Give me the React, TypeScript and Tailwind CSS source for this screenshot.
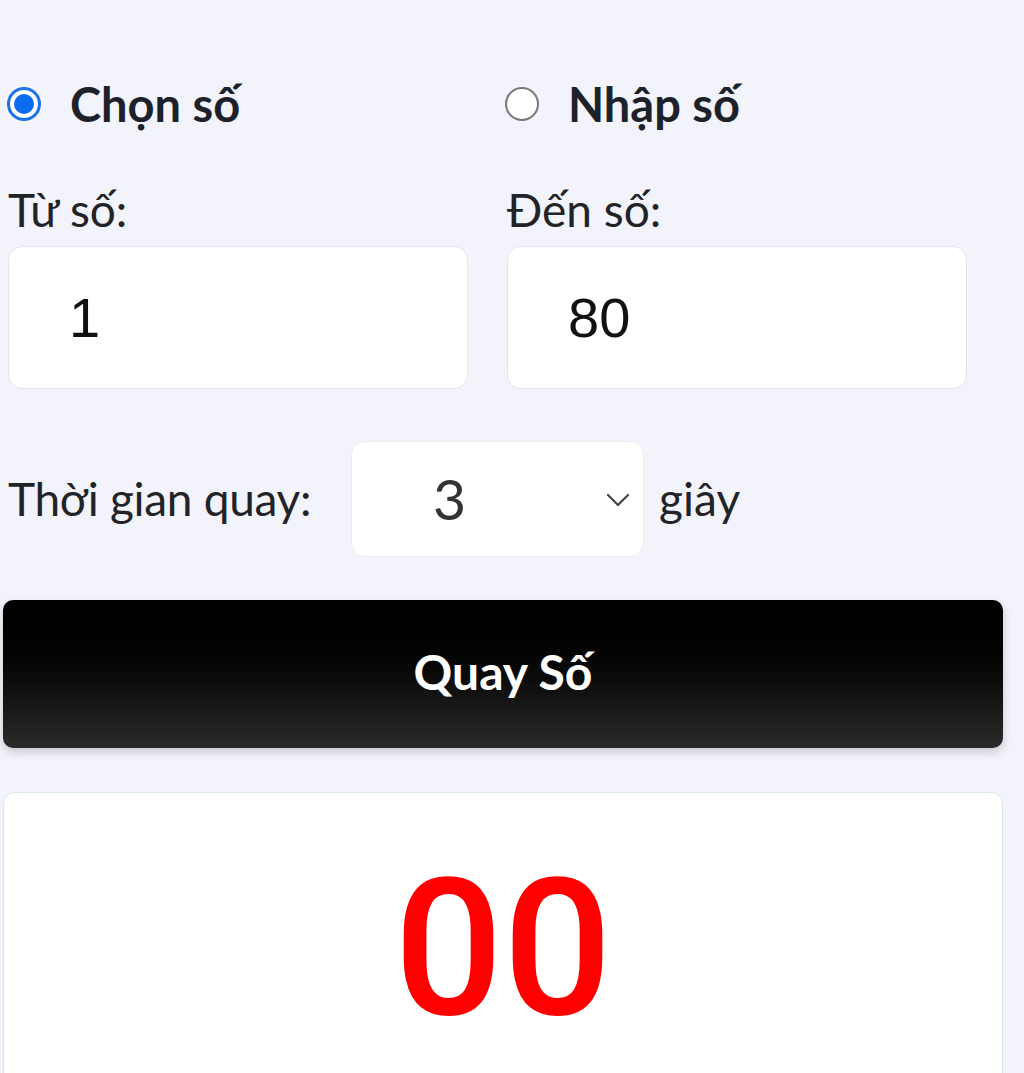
import { useState } from 'react'

function Radio({ checked }: { checked: boolean }) {
  return checked ? (
    <span className="flex h-[34px] w-[34px] items-center justify-center rounded-full border-[3px] border-[#1a73e8] bg-white">
      <span className="h-[20px] w-[20px] rounded-full bg-[#0b6cf0]" />
    </span>
  ) : (
    <span className="h-[34px] w-[34px] rounded-full border-[2.5px] border-[#7a7a7a] bg-white" />
  )
}

export default function App() {
  const [mode, setMode] = useState<'chon' | 'nhap'>('chon')
  const [from, setFrom] = useState('1')
  const [to, setTo] = useState('80')
  const [time, setTime] = useState('3')

  return (
    <div className="min-h-[1073px] bg-[#f3f4fb] pt-[76px] font-['Lato',sans-serif] text-[#222327]">
      <div className="w-[1003px] pl-[3px]">
        <div className="ml-[5px] w-[959px]">
          <div className="grid grid-cols-2 gap-x-[39px]">
            <label className="flex cursor-pointer items-center gap-[29px] -ml-[1px]" onClick={() => setMode('chon')}>
              <Radio checked={mode === 'chon'} />
              <span className="text-[47px] leading-[56px] font-bold text-[#1d2129]">Chọn số</span>
            </label>
            <label className="flex cursor-pointer items-center gap-[29px] -ml-[2px]" onClick={() => setMode('nhap')}>
              <Radio checked={mode === 'nhap'} />
              <span className="text-[47px] leading-[56px] font-bold text-[#1d2129]">Nhập số</span>
            </label>
          </div>

          <div className="mt-[50px] grid grid-cols-2 gap-x-[39px]">
            <div>
              <div className="mb-[8px] text-[46px] leading-[56px]">Từ số:</div>
              <input
                value={from}
                onChange={(e) => setFrom(e.target.value)}
                className="h-[143px] w-full rounded-[14px] border-[1.5px] border-[#e4e5ea] bg-white pl-[60px] font-['Liberation_Sans',sans-serif] text-[56px] text-[#111] outline-none"
              />
            </div>
            <div>
              <div className="mb-[8px] text-[46px] leading-[56px]">Đến số:</div>
              <input
                value={to}
                onChange={(e) => setTo(e.target.value)}
                className="h-[143px] w-full rounded-[14px] border-[1.5px] border-[#e4e5ea] bg-white pl-[60px] font-['Liberation_Sans',sans-serif] text-[56px] text-[#111] outline-none"
              />
            </div>
          </div>

          <div className="mt-[52px] flex items-center">
            <span className="text-[46px] leading-[56px] tracking-[-0.3px]">Thời gian quay:</span>
            <div className="relative ml-[40px] h-[116px] w-[293px]">
              <select
                value={time}
                onChange={(e) => setTime(e.target.value)}
                className="h-full w-full appearance-none rounded-[14px] border-[1.5px] border-[#ececf0] bg-white pl-[81px] text-[57px] text-[#333] outline-none"
              >
                {['1', '2', '3', '4', '5', '10'].map((v) => (
                  <option key={v} value={v}>{v}</option>
                ))}
              </select>
              <svg className="pointer-events-none absolute right-[14px] top-[52px]" width="24" height="14" viewBox="0 0 24 14" fill="none">
                <path d="M2 2l10 10 10-10" stroke="#444" strokeWidth="2.2" strokeLinecap="round" strokeLinejoin="round" />
              </svg>
            </div>
            <span className="ml-[15px] text-[46px] leading-[56px]">giây</span>
          </div>
        </div>

        <button className="mt-[43px] flex h-[148px] w-full items-center justify-center rounded-[10px] bg-gradient-to-b from-[#000000] to-[#2b2b2b] pb-[4px] text-[48px] font-bold text-white shadow-[0_4px_10px_rgba(0,0,0,0.18)]">
          Quay Số
        </button>

        <div className="mt-[44px] h-[320px] rounded-[12px] border-[1.5px] border-[#d9e9e4] bg-white pt-[60px] text-center">
          <div className="font-['Roboto',sans-serif] text-[192px] leading-none font-medium text-[#ff0000]">00</div>
        </div>
      </div>
    </div>
  )
}
